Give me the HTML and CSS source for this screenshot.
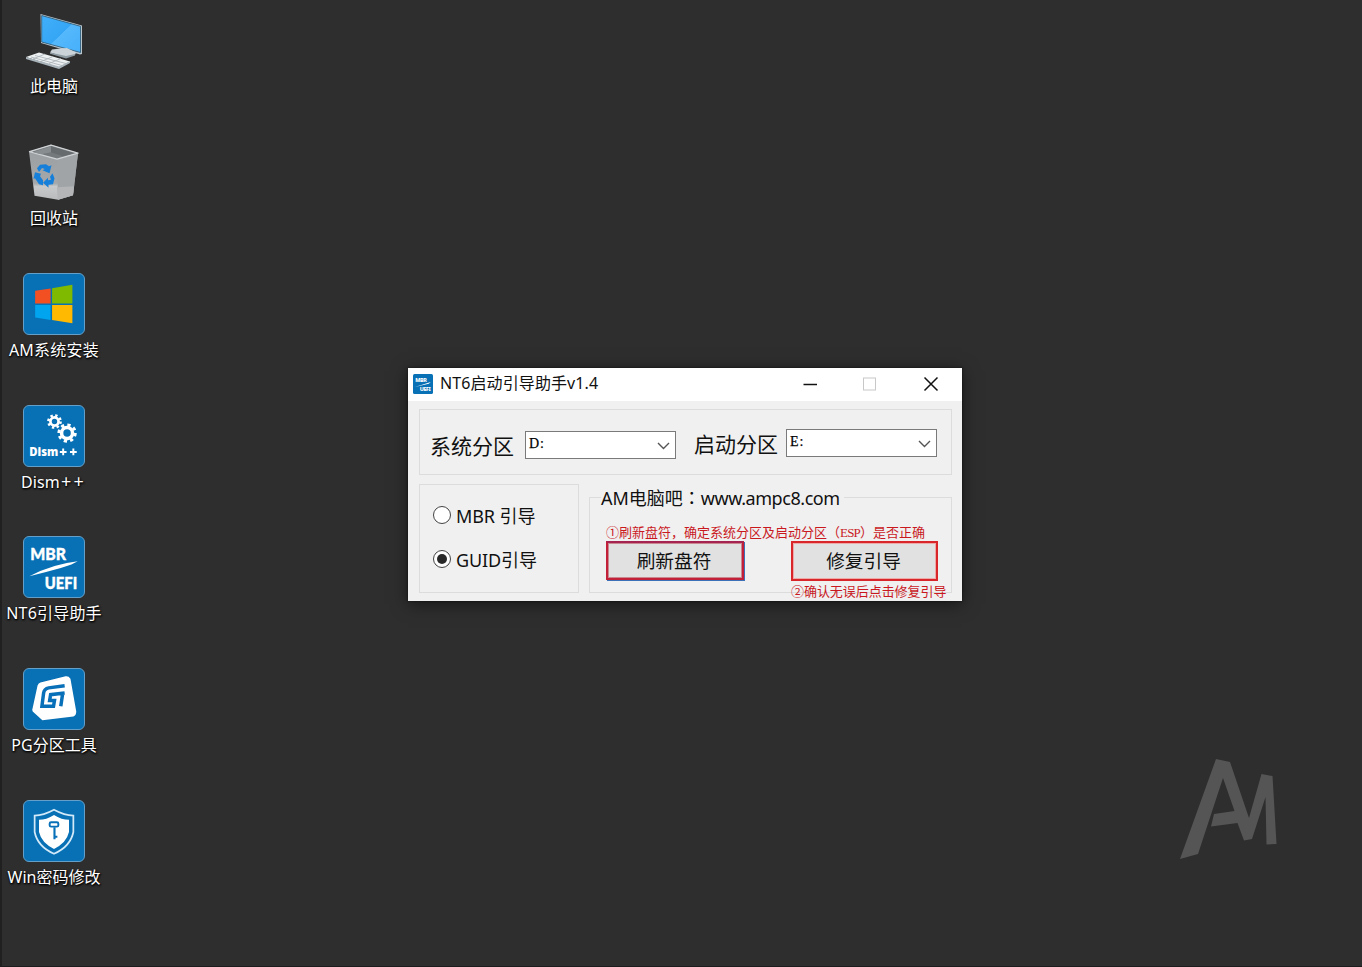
FILE: index.html
```html
<!DOCTYPE html>
<html lang="zh-CN">
<head>
<meta charset="utf-8">
<title>NT6启动引导助手</title>
<link rel="stylesheet" href="styles.css">
</head>
<body>
<main class="desktop">
  <nav class="shortcuts">
    <div class="shortcut">
      <svg class="icon" viewBox="0 0 62 62">
        <defs><linearGradient id="screen" x1="0" y1="0" x2="1" y2="1"><stop offset="0" stop-color="#41b0fb"/><stop offset=".5" stop-color="#35a6f5"/><stop offset=".51" stop-color="#55b8fc"/><stop offset="1" stop-color="#46b0fa"/></linearGradient></defs>
        <path d="M17.500 5 59 16.500V45l-2 .5L18 34Z" fill="#b9c5cd"/>
        <path d="M18.700 6.500 57.500 17.300V43.500L18.700 33Z" fill="url(#screen)" stroke="#28546f" stroke-width=".8"/>
        <path d="M37 39.500 44 39 53 43.500 52 46 43 48.500 27 43.500 29 40.500Z" fill="#cbd3d8"/>
        <path d="M27 43.500 43 47 52 45v1.500L43 49.500 27 44.700Z" fill="#8f9ba3"/>
        <path d="M3 48 16 43.500 47 52.500 36 58.500Z" fill="#edf0f1"/>
        <path d="M3 48 36 57.500 47 52v2L36 60 3 50Z" fill="#a9b4bb"/>
        <path d="m8 48 31 8.500M12 46.500l31 8M10 50l12-5M18 52.500l12-5M26 54.500l12-5" fill="none" stroke="#a7b0b5" stroke-width=".8"/>
      </svg>
      <span class="caption">此电脑</span>
    </div>
    <div class="shortcut">
      <svg class="icon" viewBox="0 0 62 62">
        <defs><linearGradient id="bin" x1="0" y1="0" x2="0" y2="1"><stop offset="0" stop-color="#9a9ea1"/><stop offset=".7" stop-color="#a4a8aa"/><stop offset=".76" stop-color="#c7c9ca"/><stop offset="1" stop-color="#b8babb"/></linearGradient></defs>
        <g transform="translate(0 1.200)">
        <path d="M6 9.500 28 2.500 55 11 50 53 35 57.500 11.500 53.500Z" fill="url(#bin)"/>
        <path d="M34 17 55 11 50 53 35 57.500Z" fill="#a0a4a7"/>
        <path d="M35 57.500 34 45 51 44 50 53Z" fill="#b3b5b7"/>
        <path d="M6.500 9.500 28 3 55 11 34 17Z" fill="#74797c" stroke="#d0d3d5" stroke-width="1.300" stroke-linejoin="round"/>
        <path d="M10 10 28 4v6L18 12Z" fill="#888d90"/>
        <path d="M28 4 51 11 40 14 28 10Z" fill="#666b6e"/>
        <g fill="#167fda"><path d="m14 26 3-3.500 6-.5 3 2 2.500-1-2 8-7-3 2.300-1.200-2.800-1-3 4Z"/><path d="m12 30 6 1.500-1 2.500 3 4v5l-4-1-4-6-1.500.5Z"/><path d="m29.500 31 2 5-1.500 6-4.500.5v3l-5.500-5 5-5v2.500l3-.5-1-3Z"/></g>
        </g>
      </svg>
      <span class="caption">回收站</span>
    </div>
    <div class="shortcut">
      <svg class="icon tile" viewBox="0 0 62 62">
        <path d="M11.500 17.300 27.500 15v15.500h-16Z" fill="#f25022"/><path d="M29 14.700 50 11.200v19.300H29Z" fill="#7fba00"/><path d="M11.500 32h16v15.500L11.500 45Z" fill="#00a4ef"/><path d="M29 32h21v18.800L29 47.500Z" fill="#ffb900"/>
      </svg>
      <span class="caption cap-am">AM系统安装</span>
    </div>
    <div class="shortcut">
      <svg class="icon tile" viewBox="0 0 62 62">
        <g fill="none" stroke="#fff"><circle cx="31.500" cy="16" r="4.200" stroke-width="2.800"/><circle cx="31.500" cy="16" r="6.300" stroke-width="2.600" stroke-dasharray="2.470 2.470"/><circle cx="44.500" cy="28" r="5.700" stroke-width="3.700"/><circle cx="44.500" cy="28" r="8.500" stroke-width="3" stroke-dasharray="3.340 3.340"/></g>
        <text class="logo-text heavy" x="5.500" y="51.500" font-size="12" textLength="30" lengthAdjust="spacingAndGlyphs">Dism</text><path d="M37 47.500h7M40.500 44v7M47.500 47.500h7M51 44v7" stroke="#fff" stroke-width="2"/>
      </svg>
      <span class="caption cap-dism">Dism<span class="plus">++</span></span>
    </div>
    <div class="shortcut">
      <svg class="icon tile" viewBox="0 0 62 62">
        <text class="logo-text mbr-text" x="6.500" y="23.500" font-size="17" textLength="37" lengthAdjust="spacingAndGlyphs">MBR</text>
        <path d="M5.500 40.500Q29 28 55.500 25L49 28.500 38 32Q22 36.500 5.500 40.500Z" fill="#fff"/>
        <text class="logo-text mbr-text" x="21.500" y="53.500" font-size="17" textLength="33.500" lengthAdjust="spacingAndGlyphs">UEFI</text>
      </svg>
      <span class="caption cap-nt">NT6引导助手</span>
    </div>
    <div class="shortcut">
      <svg class="icon tile" viewBox="0 0 62 62">
        <path d="M17 14 43 7.500Q46 7 48 10L54 44Q54 48 51 49L19 53 9 44Q8 42 9 40L14 17Q15 14.500 17 14Z" fill="#fff"/>
        <path d="M42 17.300 25.500 19.500Q21 20.500 20.300 24.500L18.500 38.500H30.500L31.500 32.500H26.500L27.500 26.500 42 24.800M40 25 38 38.500" fill="none" stroke="#0870b8" stroke-width="3.600"/>
      </svg>
      <span class="caption">PG分区工具</span>
    </div>
    <div class="shortcut">
      <svg class="icon tile" viewBox="0 0 62 62">
        <path d="M31 9Q42 15 51 15V32Q48 47 31 54.500 14 47 11 32V15Q20 15 31 9Z" fill="none" stroke="#d1e9f8" stroke-width="1.800"/>
        <path d="M31 14.500Q39 19.500 46.500 19.500V32Q44 43 31 49.500 18 43 15.500 32V19.500Q23 19.500 31 14.500Z" fill="#fff"/>
        <rect x="26.500" y="22" width="9" height="4.500" rx="1.500" fill="none" stroke="#0870b8" stroke-width="2"/><path d="M31.500 27V39.500M32 37H34.500" stroke="#0870b8" stroke-width="2.200"/>
      </svg>
      <span class="caption">Win密码修改</span>
    </div>
  </nav>

  <svg class="wallpaper-mark" viewBox="0 0 100 104"><path d="M36 2 50 5 69 61 81.500 17 92.500 19 96.500 87 86.500 87.500 85.500 40 72 82 64 83.500 57.500 66 31 69.500 34 57 54.500 54 43 21 18 97 0 102Z"/></svg>

  <section class="window">
    <header class="titlebar">
      <svg class="title-icon" viewBox="0 0 62 62"><rect width="62" height="62" rx="5" fill="#0870b4"/><text class="logo-text" x="7" y="24" font-size="17" textLength="36">MBR</text><path d="M6 40 55 25 49 30Z" fill="#fff"/><text class="logo-text" x="21" y="53" font-size="17" textLength="34">UEFI</text></svg>
      <h1 class="title">NT6启动引导助手v1.4</h1>
      <svg class="controls" viewBox="0 0 144 33" fill="none"><path d="M1.500 16.500h13.500" stroke="#111" stroke-width="1.500"/><rect x="61.500" y="10" width="12" height="12" stroke="#c8c8c8"/><path d="m122.500 9.500 13 13m0-13-13 13" stroke="#111" stroke-width="1.500"/></svg>
    </header>
    <div class="client">
      <div class="group partitions">
        <span class="part-label">系统分区</span>
        <div class="combo"><span>D:</span><svg class="chevron" viewBox="0 0 13 8"><path d="m1 1 5.500 5.500L12 1"/></svg></div>
        <span class="part-label boot-label">启动分区</span>
        <div class="combo boot-combo"><span>E:</span><svg class="chevron" viewBox="0 0 13 8"><path d="m1 1 5.500 5.500L12 1"/></svg></div>
      </div>
      <div class="lower">
        <div class="group modes">
          <label class="mode"><i class="radio"></i><span>MBR 引导</span></label>
          <label class="mode"><i class="radio checked"></i><span>GUID引导</span></label>
        </div>
        <div class="group actions">
          <div class="legend"><span>AM电脑吧<b lang="zh-TW">：</b><a>www.ampc8.com</a></span></div>
          <p class="note">①刷新盘符，确定系统分区及启动分区（<em>ESP</em>）是否正确</p>
          <div class="buttons"><button class="btn refresh">刷新盘符</button><button class="btn repair">修复引导</button></div>
          <p class="note note-two">②确认无误后点击修复引导</p>
        </div>
      </div>
    </div>
  </section>
</main>
</body>
</html>
```
FILE: styles.css
```css
* { box-sizing: border-box; }
body { margin: 0; background: #2e2e2e; }
.desktop {
  position: relative; width: 1362px; height: 967px; overflow: hidden;
  background: #2e2e2e; border-left: 2px solid #202020; border-bottom: 1px solid #1c1c1c;
  font-family: "Noto Sans", "Noto Sans CJK SC", sans-serif;
}
.shortcuts { display: flex; flex-direction: column; width: 104px; padding-top: 9px; }
.shortcut { display: flex; flex-direction: column; align-items: center; height: 131.850px; }
.icon { display: block; width: 62px; height: 62px; flex: none; }
.tile { background: #0870b4; border: 1px solid #639fc8; border-radius: 6px; }
.caption {
  margin-top: 3px; color: #fff; font-size: 16px; line-height: 24px; white-space: nowrap;
  text-shadow: 1px 1px 2px #000, 0 1px 2px #000;
}
.cap-am { letter-spacing: .25px; }
.cap-nt { letter-spacing: .2px; }
.cap-dism { letter-spacing: .1px; margin-left: -1px; }
.plus { font-size: 18px; letter-spacing: 2.200px; line-height: 20px; margin-left: 1px; }
.logo-text { font-family: "Noto Sans", sans-serif; font-weight: 800; fill: #fff; }
.heavy { font-family: "Open Sans", sans-serif; }
.mbr-text { font-family: Lato, "Noto Sans", sans-serif; font-weight: 900; stroke: #fff; stroke-width: .4px; }
.wallpaper-mark { position: absolute; left: 1178px; top: 757px; width: 100px; height: 104px; fill: #555; }

.window {
  position: absolute; left: 406px; top: 368px; width: 554px; height: 233px;
  background: #f0f0f0; color: #111; box-shadow: 0 3px 16px rgba(0,0,0,.5), 0 0 2px #111;
}
.titlebar { display: flex; align-items: center; height: 33px; padding-left: 5px; background: #fff; }
.title-icon { width: 20px; height: 20px; margin-top: -1px; }
.title { margin: 0 auto 3px 7px; font-size: 16px; font-weight: 400; line-height: 24px; letter-spacing: .1px; white-space: nowrap; }
.controls { width: 144px; height: 33px; margin-right: 16px; }
.client { padding: 8px 10px 8px 11px; }
.group { border: 1px solid #dcdcdc; }
.partitions { display: flex; height: 66px; padding: 21px 0 0 10px; }
.part-label { width: 95px; font-size: 21px; line-height: 30px; white-space: nowrap; }
.boot-label { width: 92px; margin: -2px 0 0 18px; }
.combo {
  display: flex; justify-content: space-between; width: 151px; height: 28px; padding: 1px 5px 0 3px;
  background: #fff; border: 1px solid #7a7a7a; line-height: 22px;
}
.combo span { font-family: "Liberation Serif", serif; letter-spacing: 1px; font-size: 14px; color: #000; -webkit-text-stroke: .25px #000; }
.boot-combo { margin-top: -2px; }
.chevron { width: 13px; height: 8px; margin-top: 9px; fill: none; stroke: #555; stroke-width: 1.400; }
.lower { display: flex; gap: 10px; margin-top: 9px; height: 109px; }
.modes { width: 160px; padding: 18px 0 0 13px; }
.mode { display: flex; align-items: center; height: 24px; margin-bottom: 20px; font-size: 18px; gap: 5px; white-space: nowrap; }
.mode span { margin-top: -1px; letter-spacing: -.1px; }
.radio { display: flex; width: 18px; height: 18px; border: 1.500px solid #444; border-radius: 50%; background: #fff; }
.checked::before { content: ""; width: 10px; height: 10px; margin: auto; border-radius: 50%; background: #282828; }
.actions { width: 363px; height: 96px; margin-top: 13px; padding-left: 11px; }
.legend { height: 26px; margin-top: -14px; font-size: 18px; line-height: 26px; white-space: nowrap; }
.legend span { display: inline-block; padding: 0 4px 0 0; background: #f0f0f0; }
.legend b { font-family: "Noto Sans CJK TC", sans-serif; font-weight: 400; }
.legend a { letter-spacing: -.45px; }
.note {
  margin: 14px 0 0 5px; height: 17px; color: #c9191e; font-family: "Liberation Serif", "Noto Sans CJK SC", sans-serif;
  font-size: 13px; line-height: 18px; white-space: nowrap;
}
.note em { font-style: normal; letter-spacing: -.8px; }
.buttons { display: flex; gap: 47px; margin: 0 0 0 5px; }
.btn {
  width: 138px; height: 40px; padding: 0 2px 3px 0; border: 2px solid #c52335; outline: 0; background: #e1e1e1;
  color: #111; font: 18.700px/27px "Noto Sans CJK SC", sans-serif;
}
.refresh { height: 39px; border-color: #c22038; border-top-color: #a52350; box-shadow: inset 0 0 0 1px #ca8790, 1px 1px #3c71b8; }
.repair { width: 147px; border-color: #d9262a; box-shadow: inset 0 0 0 1px #eeaaa9; }
.note-two { margin: 2px 0 0 190px; letter-spacing: -.05px; }
```
